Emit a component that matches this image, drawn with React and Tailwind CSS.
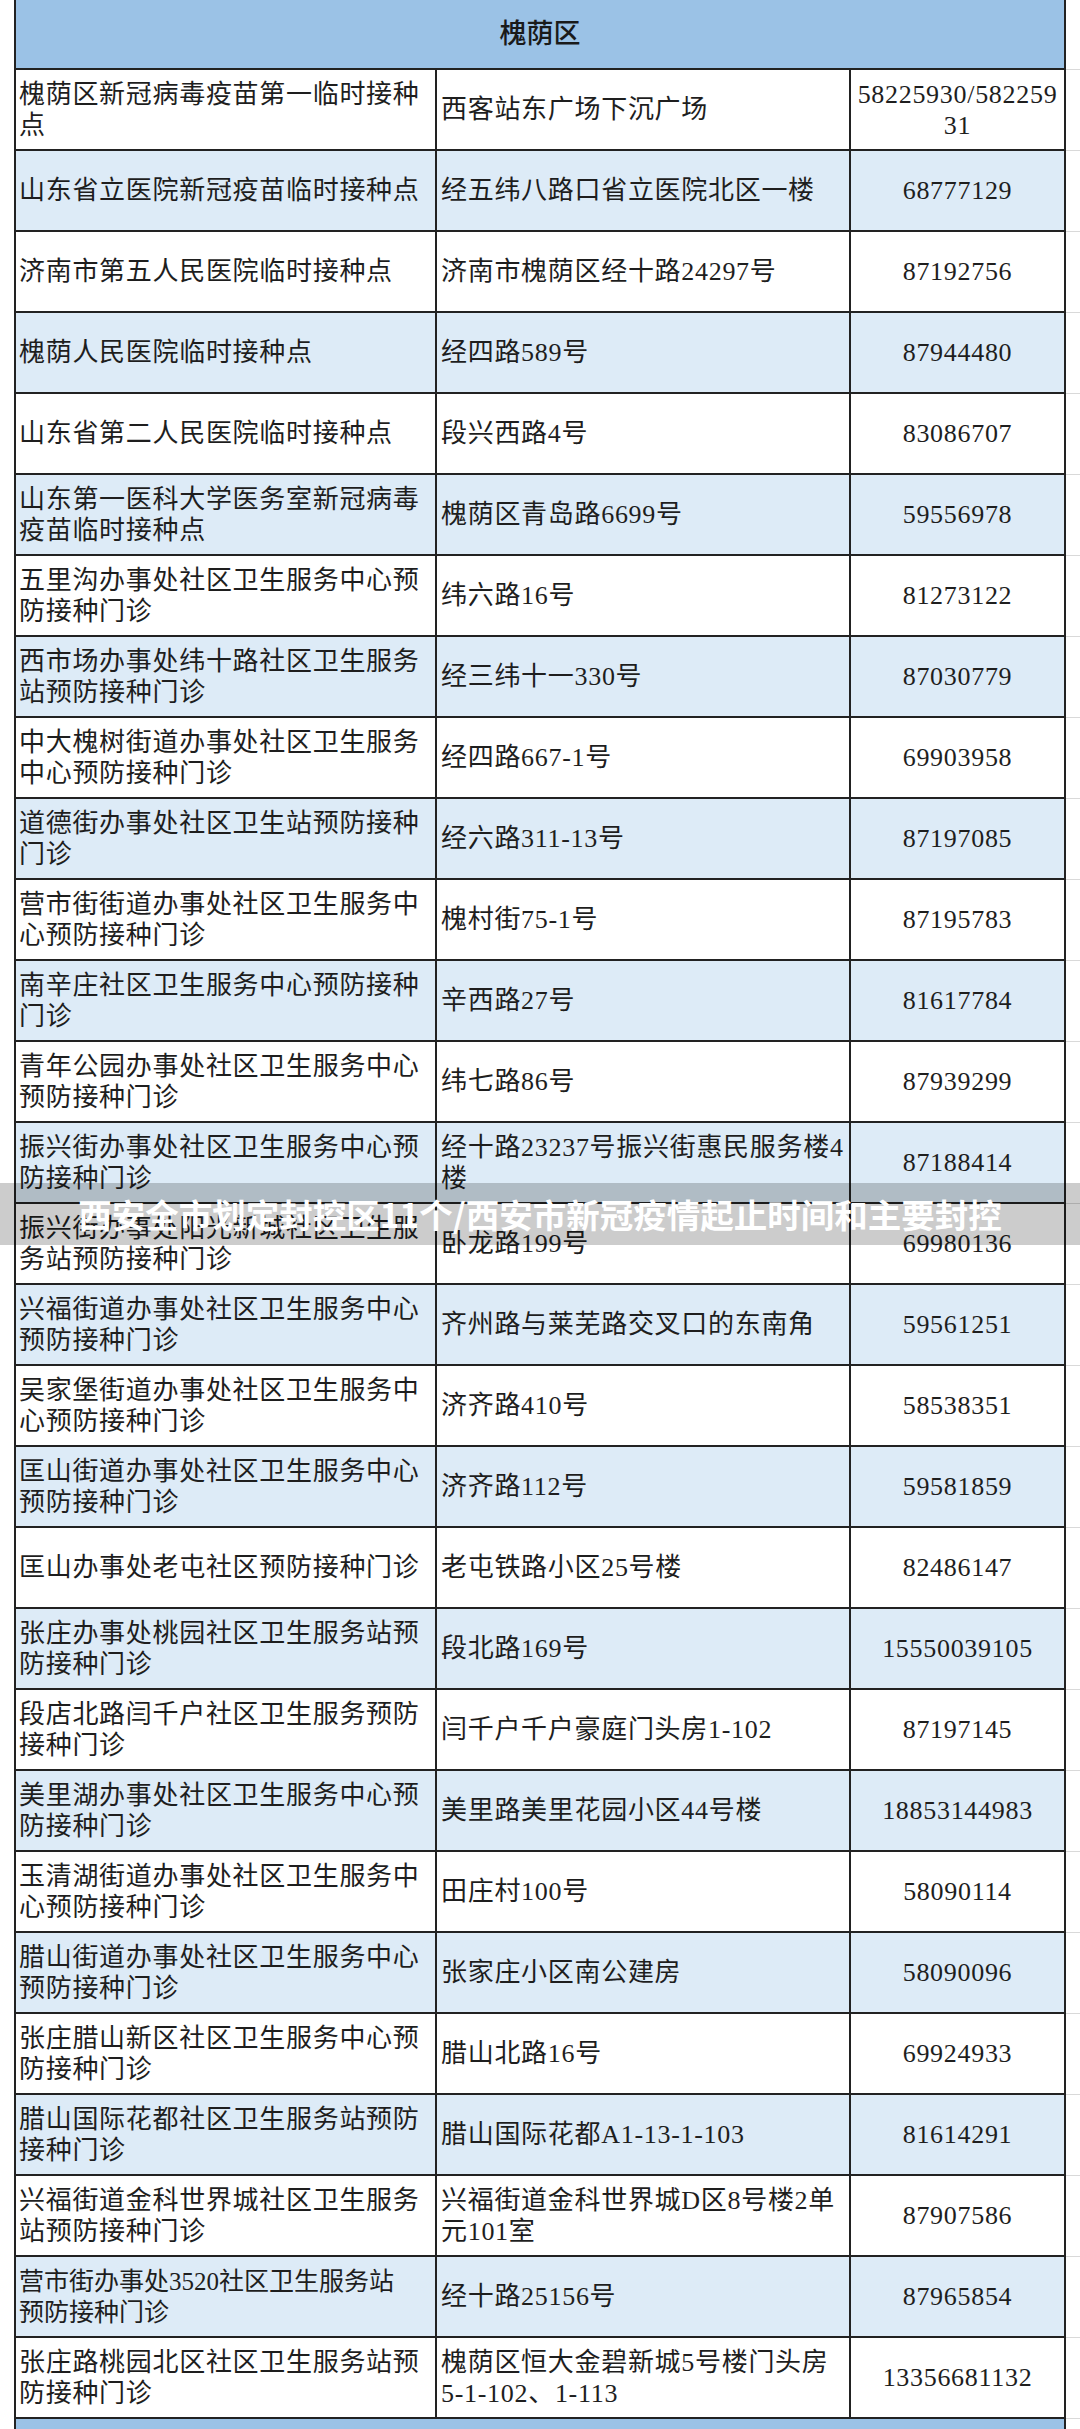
import React from 'react';

const rows = [
  ['槐荫区新冠病毒疫苗第一临时接种点', '西客站东广场下沉广场', '58225930/58225931'],
  ['山东省立医院新冠疫苗临时接种点', '经五纬八路口省立医院北区一楼', '68777129'],
  ['济南市第五人民医院临时接种点', '济南市槐荫区经十路24297号', '87192756'],
  ['槐荫人民医院临时接种点', '经四路589号', '87944480'],
  ['山东省第二人民医院临时接种点', '段兴西路4号', '83086707'],
  ['山东第一医科大学医务室新冠病毒疫苗临时接种点', '槐荫区青岛路6699号', '59556978'],
  ['五里沟办事处社区卫生服务中心预防接种门诊', '纬六路16号', '81273122'],
  ['西市场办事处纬十路社区卫生服务站预防接种门诊', '经三纬十一330号', '87030779'],
  ['中大槐树街道办事处社区卫生服务中心预防接种门诊', '经四路667-1号', '69903958'],
  ['道德街办事处社区卫生站预防接种门诊', '经六路311-13号', '87197085'],
  ['营市街街道办事处社区卫生服务中心预防接种门诊', '槐村街75-1号', '87195783'],
  ['南辛庄社区卫生服务中心预防接种门诊', '辛西路27号', '81617784'],
  ['青年公园办事处社区卫生服务中心预防接种门诊', '纬七路86号', '87939299'],
  ['振兴街办事处社区卫生服务中心预防接种门诊', '经十路23237号振兴街惠民服务楼4楼', '87188414'],
  ['振兴街办事处阳光新城社区卫生服务站预防接种门诊', '卧龙路199号', '69980136'],
  ['兴福街道办事处社区卫生服务中心预防接种门诊', '齐州路与莱芜路交叉口的东南角', '59561251'],
  ['吴家堡街道办事处社区卫生服务中心预防接种门诊', '济齐路410号', '58538351'],
  ['匡山街道办事处社区卫生服务中心预防接种门诊', '济齐路112号', '59581859'],
  ['匡山办事处老屯社区预防接种门诊', '老屯铁路小区25号楼', '82486147'],
  ['张庄办事处桃园社区卫生服务站预防接种门诊', '段北路169号', '15550039105'],
  ['段店北路闫千户社区卫生服务预防接种门诊', '闫千户千户豪庭门头房1-102', '87197145'],
  ['美里湖办事处社区卫生服务中心预防接种门诊', '美里路美里花园小区44号楼', '18853144983'],
  ['玉清湖街道办事处社区卫生服务中心预防接种门诊', '田庄村100号', '58090114'],
  ['腊山街道办事处社区卫生服务中心预防接种门诊', '张家庄小区南公建房', '58090096'],
  ['张庄腊山新区社区卫生服务中心预防接种门诊', '腊山北路16号', '69924933'],
  ['腊山国际花都社区卫生服务站预防接种门诊', '腊山国际花都A1-13-1-103', '81614291'],
  ['兴福街道金科世界城社区卫生服务站预防接种门诊', '兴福街道金科世界城D区8号楼2单元101室', '87907586'],
  ['营市街办事处3520社区卫生服务站\n预防接种门诊', '经十路25156号', '87965854', true],
  ['张庄路桃园北区社区卫生服务站预防接种门诊', '槐荫区恒大金碧新城5号楼门头房5-1-102、1-113', '13356681132'],
];

const cellFont = { fontFamily: '"Liberation Serif", "Noto Sans CJK SC", serif' };

const Row = ({ name, addr, phone, tight, shaded }) => (
  <div className="flex h-[81px]">
    <div className="w-[14px] shrink-0" />
    <div
      className={`flex w-[1052px] shrink-0 border-x-2 border-b-2 border-[#222] text-[#1e1e1e] leading-[31px] ${
        shaded ? 'bg-[#ddebf7]' : 'bg-white'
      }`}
      style={cellFont}
    >
      {/* Name */}
      <div
        className={`flex w-[421px] shrink-0 items-center border-r-2 border-[#222] pl-[3px] pr-[4px] ${
          tight ? 'text-[25px] tracking-[0px] whitespace-pre-line' : 'text-[26px] tracking-[0.7px]'
        }`}
      >
        <span>{name}</span>
      </div>
      {/* Address */}
      <div className="flex w-[414px] shrink-0 items-center border-r-2 border-[#222] pl-[4px] pr-[2px] text-[26px] tracking-[0.7px]">
        <span>{addr}</span>
      </div>
      {/* Phone */}
      <div className="flex flex-1 items-center justify-center px-[4px] text-center text-[26px] tracking-[0.7px] break-all">
        <span>{phone}</span>
      </div>
    </div>
    <div className="flex-1 border-b border-[#d9d9d9]" />
  </div>
);

export default function App() {
  return (
    <div className="relative w-[1080px] h-[2429px] overflow-hidden bg-white">
      {/* District header */}
      <div className="flex h-[70px]">
        <div className="w-[14px] shrink-0" />
        <div
          className="flex w-[1052px] shrink-0 items-center justify-center border-x-2 border-b-2 border-[#222] bg-[#9bc2e6] text-[27px] font-medium text-[#1a1a1a]"
          style={cellFont}
        >
          槐荫区
        </div>
        <div className="flex-1 border-b border-[#d9d9d9]" />
      </div>

      {rows.map((r, i) => (
        <Row key={i} name={r[0]} addr={r[1]} phone={r[2]} tight={r[3]} shaded={i % 2 === 1} />
      ))}

      {/* Next section header, cut off */}
      <div className="flex h-[10px]">
        <div className="w-[14px] shrink-0" />
        <div className="w-[1052px] shrink-0 border-x-2 border-[#222] bg-[#9bc2e6]" />
      </div>

      {/* Caption overlay */}
      <div className="absolute left-0 top-[1183px] flex h-[62px] w-full items-center justify-center bg-black/20">
        <span
          className="text-[33.5px] font-bold text-white leading-none"
          style={{ fontFamily: '"Noto Sans CJK SC", "Noto Sans", sans-serif' }}
        >
          西安全市划定封控区11个/西安市新冠疫情起止时间和主要封控
        </span>
      </div>
    </div>
  );
}
